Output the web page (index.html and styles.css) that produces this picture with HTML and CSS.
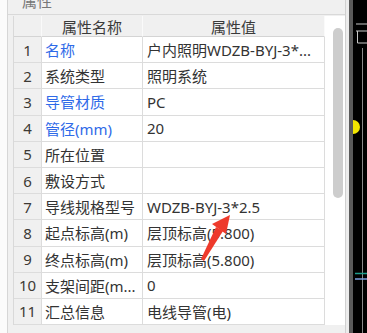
FILE: index.html
```html
<!DOCTYPE html>
<html lang="zh-CN">
	<head>
		<meta charset="utf-8">
		<title>属性</title>
		<link rel="stylesheet" href="styles.css">
	</head>
	<body>
		<div class="app">
			<div class="gap"></div>
			<div class="panel">
				<div class="panel-title"><span>属性</span></div>
				<div class="panel-body">
					<div class="grid">
						<div class="cell head"></div>
						<div class="cell head">属性名称</div>
						<div class="cell head">属性值</div>

						<div class="cell num">1</div>
						<div class="cell name blue">名称</div>
						<div class="cell value">户内照明WDZB-BYJ-3*...</div>

						<div class="cell num">2</div>
						<div class="cell name">系统类型</div>
						<div class="cell value">照明系统</div>

						<div class="cell num">3</div>
						<div class="cell name blue">导管材质</div>
						<div class="cell value">PC</div>

						<div class="cell num">4</div>
						<div class="cell name blue">管径(mm)</div>
						<div class="cell value">20</div>

						<div class="cell num">5</div>
						<div class="cell name">所在位置</div>
						<div class="cell value"></div>

						<div class="cell num">6</div>
						<div class="cell name">敷设方式</div>
						<div class="cell value"></div>

						<div class="cell num">7</div>
						<div class="cell name">导线规格型号</div>
						<div class="cell value">WDZB-BYJ-3*2.5</div>

						<div class="cell num">8</div>
						<div class="cell name">起点标高(m)</div>
						<div class="cell value">层顶标高(5.800)</div>

						<div class="cell num">9</div>
						<div class="cell name">终点标高(m)</div>
						<div class="cell value">层顶标高(5.800)</div>

						<div class="cell num">10</div>
						<div class="cell name">支架间距(m...</div>
						<div class="cell value">0</div>

						<div class="cell num">11</div>
						<div class="cell name">汇总信息</div>
						<div class="cell value">电线导管(电)</div>
					</div>
					<div class="scrollbar">
						<div class="thumb"></div>
					</div>
				</div>
			</div>
			<div class="splitter"></div>
			<svg class="canvas" width="14" height="333" viewBox="353 0 14 333">
				<rect x="353" y="0" width="14" height="333" fill="#000"/>
				<path d="M356 24 H367 M356 31 H367 M357.5 31 V43 H367" stroke="#c8c8c8" stroke-width="1" fill="none"/>
				<line x1="362.5" y1="48" x2="362.5" y2="333" stroke="#8a8a8a" stroke-width="1"/>
				<path d="M353 120 A7 7 0 0 1 353 134 Z" fill="#f2e600"/>
				<line x1="355" y1="273.5" x2="367" y2="273.5" stroke="#1f9c8c" stroke-width="1.5"/>
				<line x1="355" y1="279" x2="367" y2="279" stroke="#7d9fe0" stroke-width="1.5"/>
			</svg>
			<svg class="arrow" width="367" height="333" viewBox="0 0 367 333">
				<polygon points="230,215 212,224 226,234" fill="#ee3a2b"/>
				<polygon points="216,227 223,231 204,261 201,259" fill="#ee3a2b"/>
			</svg>
		</div>
	</body>
</html>
```

FILE: styles.css
```css
body {
	margin: 0;
	background-color: #ffffff;
	font-family: "Noto Sans", "Noto Sans CJK SC", sans-serif;
	font-size: 15px;
	color: #333333;
}

.app {
	position: relative;
	display: flex;
	width: 367px;
	height: 333px;
	overflow: hidden;
}

.gap {
	width: 7px;
	background-color: #fbfbfb;
}

.panel {
	width: 337px;
	display: flex;
	flex-direction: column;
	background-color: #f0f0f0;
	border-left: 1px solid #d6d6d6;
	border-right: 1px solid #d0d0d0;
}

.panel-title {
	height: 14px;
	overflow: hidden;
	border-bottom: 1px solid #d9d9d9;
	padding-left: 14px;
	color: #777777;
}

.panel-title span {
	display: block;
	margin-top: -9px;
	line-height: 20px;
}

.panel-body {
	display: flex;
	align-items: flex-start;
	padding: 1px 0 0 5px;
	flex: 1;
}

/* property grid */

.grid {
	display: grid;
	grid-template-columns: 28px 101px 182px;
	grid-template-rows: 21px;
	grid-auto-rows: 26.2px;
	border-left: 1px solid #d9d9d9;
	background-color: #ffffff;
}

.cell {
	box-sizing: border-box;
	display: flex;
	align-items: center;
	border-right: 1px solid #dcdcdc;
	border-bottom: 1px solid #dcdcdc;
	white-space: nowrap;
	overflow: hidden;
}

.head {
	justify-content: center;
	background-color: #f0f0f0;
	border-right-color: #fafafa;
	border-bottom-color: #d4d4d4;
	color: #3a3a3a;
}

.num {
	justify-content: center;
	background-color: #f0f0f0;
	color: #3d3a35;
}

.name {
	padding-left: 3px;
}

.value {
	padding-left: 4px;
}

.blue {
	color: #2f6ae8;
}

.scrollbar {
	width: 20px;
	height: 309px;
	padding-top: 12px;
	box-sizing: border-box;
	background-color: #ffffff;
}

.thumb {
	width: 10px;
	height: 170px;
	margin-left: 8px;
	border-radius: 5px;
	background-color: #cdcdcd;
}

.splitter {
	width: 3px;
	background-color: #ececec;
	border-right: 4px solid #5a5a5a;
}

.canvas {
	display: block;
}

.arrow {
	position: absolute;
	left: 0;
	top: 0;
	pointer-events: none;
}
```
